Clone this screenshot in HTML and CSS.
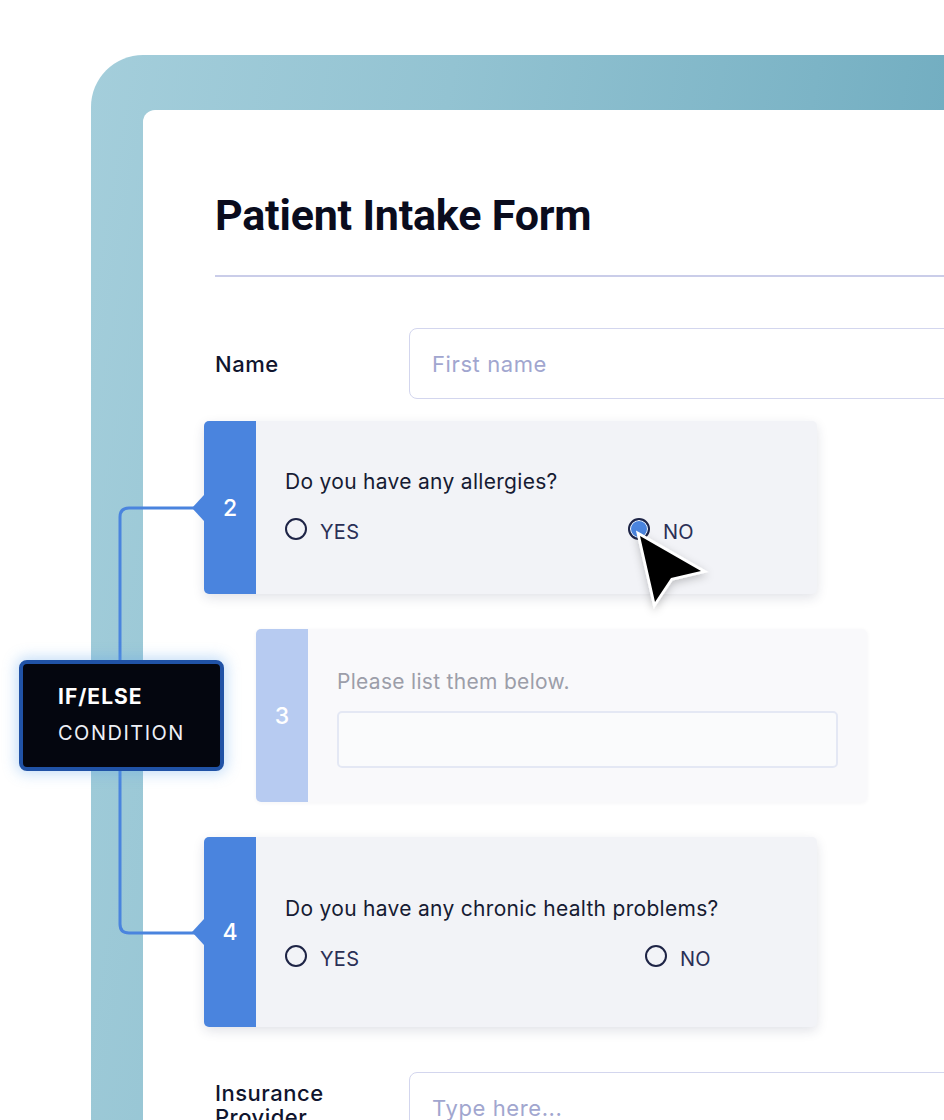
FILE: index.html
```html
<!DOCTYPE html>
<html>
<head>
<meta charset="utf-8">
<link rel="stylesheet" href="styles.css">
</head>
<body>
<div class="stage">
  <div class="frame">
    <div class="sheet">
      <h1 class="title">Patient Intake Form</h1>
      <div class="rule"></div>
      <div class="row name-row">
        <div class="label">Name</div>
        <div class="input"><span class="ph">First name</span></div>
      </div>

      <div class="qcard q2">
        <div class="num">2</div>
        <div class="qbody">
          <div class="question">Do you have any allergies?</div>
          <div class="options">
            <div class="opt opt-yes"><span class="radio"></span><span class="olabel">YES</span></div>
            <div class="opt"><span class="radio checked"></span><span class="olabel">NO</span></div>
          </div>
        </div>
      </div>

      <div class="qcard q3">
        <div class="num">3</div>
        <div class="qbody">
          <div class="question muted">Please list them below.</div>
          <div class="textbox"></div>
        </div>
      </div>

      <div class="qcard q4">
        <div class="num">4</div>
        <div class="qbody">
          <div class="question">Do you have any chronic health problems?</div>
          <div class="options">
            <div class="opt opt-yes wide"><span class="radio"></span><span class="olabel">YES</span></div>
            <div class="opt"><span class="radio"></span><span class="olabel">NO</span></div>
          </div>
        </div>
      </div>

      <div class="row ins-row">
        <div class="label"><span class="wrap">Insurance Provider</span></div>
        <div class="input"><span class="ph">Type here...</span></div>
      </div>
    </div>
  </div>

  <svg class="connector" width="944" height="1120" viewBox="0 0 944 1120">
    <path d="M196 508 H129 Q120 508 120 517 V924 Q120 933 129 933 H196" fill="none" stroke="#4a84de" stroke-width="3"/>
  </svg>

  <div class="cond">
    <div class="cond-title">IF/ELSE</div>
    <div class="cond-sub">CONDITION</div>
  </div>

  <svg class="cursor" width="100" height="110" viewBox="0 0 100 110">
    <defs>
      <filter id="sh" x="-30%" y="-30%" width="160%" height="160%">
        <feDropShadow dx="0" dy="3" stdDeviation="4" flood-color="#000" flood-opacity="0.22"/>
      </filter>
    </defs>
    <path d="M22 26 L83 61 L53 68 L37 92 Z" fill="#000" stroke="#fff" stroke-width="5.5" stroke-linejoin="miter" paint-order="stroke" filter="url(#sh)"/>
  </svg>
</div>
</body>
</html>
```

FILE: styles.css
```css
html, body {
  margin: 0;
  padding: 0;
  background: #fff;
}
.stage {
  position: relative;
  width: 944px;
  height: 1120px;
  overflow: hidden;
  background: #fff;
  font-family: Inter, "Noto Sans", sans-serif;
}
.frame {
  margin: 55px 0 0 91px;
  height: 1065px;
  box-sizing: border-box;
  padding: 55px 0 0 52px;
  border-top-left-radius: 52px;
  background: linear-gradient(100deg, #a4cedb 0%, #93c3d2 35%, #7cb4c6 70%, #67a6bb 100%);
}
.sheet {
  height: 100%;
  box-sizing: border-box;
  background: #fff;
  border-top-left-radius: 12px;
  padding: 79px 0 0 72px;
  overflow: hidden;
}
.title {
  margin: 0;
  font-family: Roboto, sans-serif;
  font-weight: 700;
  font-size: 43px;
  line-height: 52px;
  letter-spacing: -0.2px;
  color: #0a0c1d;
}
.rule {
  margin-top: 34px;
  height: 2px;
  background: #cacde9;
  width: 900px;
}
.row {
  display: flex;
  align-items: center;
  width: 900px;
}
.name-row {
  margin-top: 51px;
}
.label {
  width: 194px;
  flex: none;
  font-size: 22px;
  font-weight: 500;
  letter-spacing: 0.5px;
  color: #10152e;
  line-height: 24px;
}
.wrap {
  display: block;
  width: 130px;
}
.input {
  flex: 1;
  height: 71px;
  box-sizing: border-box;
  border: 1.5px solid #d3d6ee;
  border-radius: 8px;
  padding-left: 22px;
  display: flex;
  align-items: center;
}
.ph {
  font-size: 22px;
  color: #a1a6cf;
  letter-spacing: 0.6px;
}
.qcard {
  display: flex;
  width: 613px;
  height: 173px;
  background: #f2f3f7;
  border-radius: 5px;
  box-shadow: 0 4px 12px rgba(30, 40, 80, 0.13);
}
.q2 {
  margin: 22px 0 0 -11px;
}
.q3 {
  margin: 35px 0 0 41px;
  width: 611px;
  background: #f9f9fb;
  box-shadow: 0 1px 4px rgba(30, 40, 80, 0.05);
}
.q4 {
  margin: 35px 0 0 -11px;
  height: 190px;
}
.num {
  position: relative;
  flex: none;
  width: 52px;
  background: #4a84de;
  border-radius: 5px 0 0 5px;
  color: #fff;
  font-size: 23px;
  font-weight: 500;
  display: flex;
  align-items: center;
  justify-content: center;
}
.q2 .num::before,
.q4 .num::before {
  content: "";
  position: absolute;
  left: -12px;
  top: 50%;
  margin-top: -13px;
  border-right: 12px solid #4a84de;
  border-top: 13px solid transparent;
  border-bottom: 13px solid transparent;
}
.q3 .num {
  background: #b7cbf1;
}
.qbody {
  flex: 1;
  padding-left: 29px;
  display: flex;
  flex-direction: column;
  justify-content: center;
}
.question {
  font-size: 21px;
  line-height: 24px;
  color: #161b33;
  letter-spacing: 0.3px;
}
.q2 .question {
  margin-top: -4px;
}
.question.muted {
  color: #9c9ea9;
  margin-top: 6px;
}
.options {
  display: flex;
  margin-top: 23px;
}
.opt {
  display: flex;
  align-items: center;
  height: 24px;
}
.opt-yes {
  width: 343px;
}
.opt-yes.wide {
  width: 360px;
}
.radio {
  width: 22px;
  height: 22px;
  box-sizing: border-box;
  border: 2px solid #1e2446;
  border-radius: 50%;
  margin-right: 13px;
}
.radio.checked {
  background: #4a84de;
  box-shadow: inset 0 0 0 1px #fff;
}
.olabel {
  font-size: 20px;
  color: #2a2f55;
  letter-spacing: 0.3px;
  margin-top: 6px;
}
.textbox {
  margin-top: 17px;
  width: 501px;
  height: 57px;
  box-sizing: border-box;
  border: 2px solid #e4e8f4;
  border-radius: 5px;
  background: #fafbfc;
}
.ins-row {
  margin-top: 45px;
  align-items: flex-start;
}
.ins-row .label {
  padding-top: 9px;
}
.connector {
  position: absolute;
  left: 0;
  top: 0;
  pointer-events: none;
}
.cond {
  position: absolute;
  left: 19px;
  top: 660px;
  width: 205px;
  height: 111px;
  box-sizing: border-box;
  border: 4px solid #2052a6;
  border-radius: 8px;
  background: #04060f;
  box-shadow: 0 0 14px 3px rgba(90, 160, 235, 0.35);
  padding-left: 35px;
  display: flex;
  flex-direction: column;
  justify-content: center;
  color: #fff;
}
.cond-title {
  font-size: 21px;
  font-weight: 700;
  letter-spacing: 1px;
  line-height: 24px;
  margin-top: -2px;
}
.cond-sub {
  margin-top: 12px;
  font-size: 20px;
  font-weight: 400;
  letter-spacing: 1.5px;
  line-height: 24px;
  color: #eef0f6;
}
.cursor {
  position: absolute;
  left: 618px;
  top: 510px;
  pointer-events: none;
}
```
